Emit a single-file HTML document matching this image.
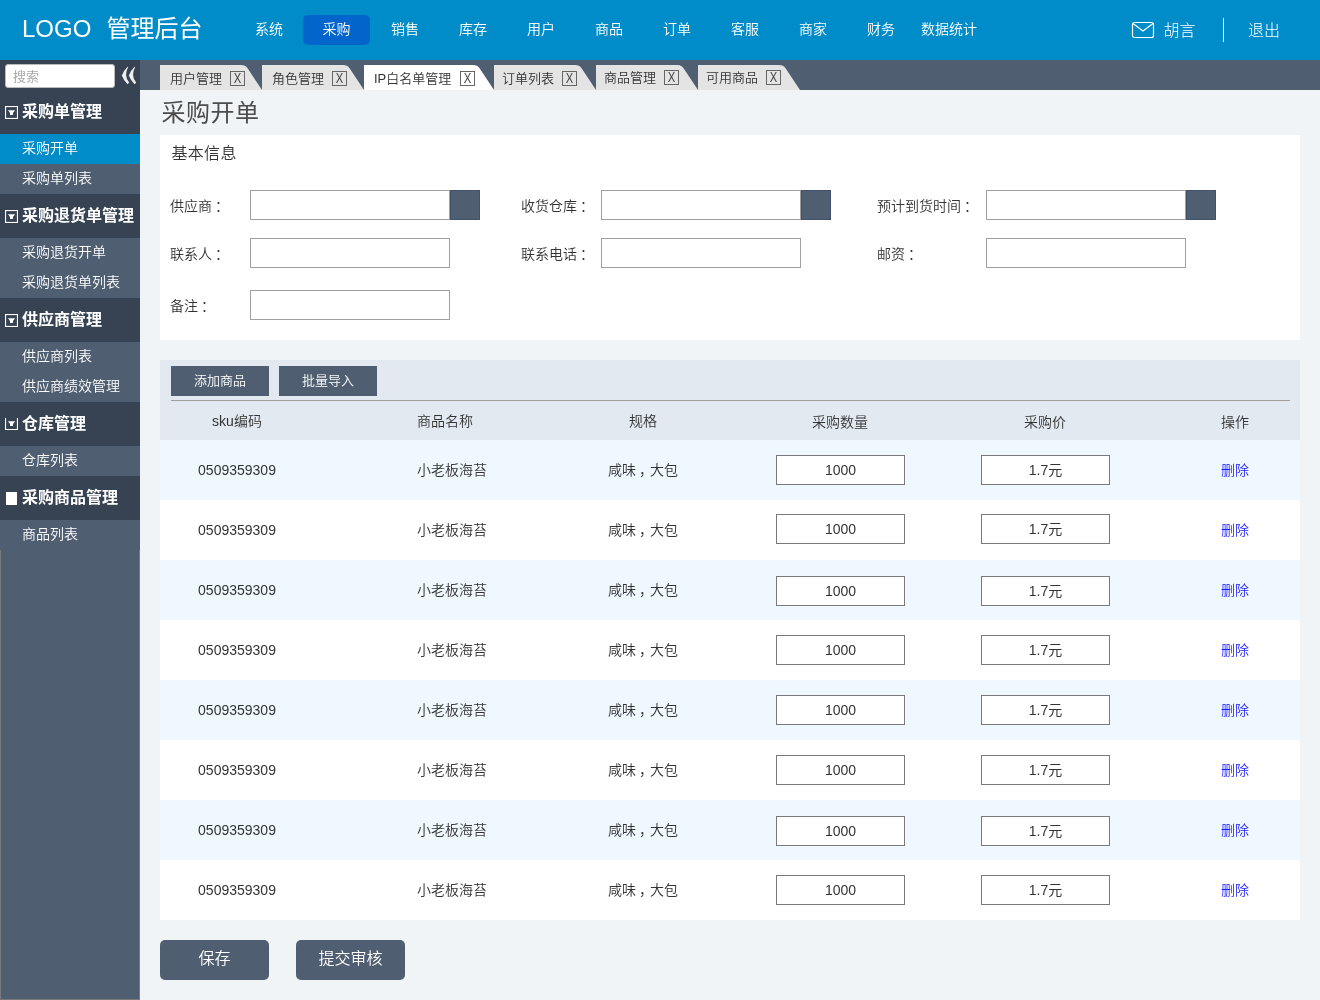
<!DOCTYPE html>
<html lang="zh-CN"><head><meta charset="utf-8"><title>采购开单</title>
<style>
*{box-sizing:border-box;margin:0;padding:0}
html,body{width:1320px;height:1000px;overflow:hidden}
body{position:relative;will-change:transform;background:#f0f4f7;font-family:"Liberation Sans","Noto Sans CJK SC",sans-serif;font-size:14px;color:#333;}
.abs,.hdr,.side,.tabs,.tab,.nav,.row,.c,.inp,.lbl,.fi,.fb,.btn,.sh,.si,.tt,.tx{position:absolute}
.hdr{left:0;top:0;width:1320px;height:60px;background:#008cc8;color:#fff}
.logo{left:22px;top:13px;font-size:24px;line-height:32px;white-space:nowrap;font-weight:350}
.nav{top:15px;width:68px;height:30px;line-height:28px;text-align:center;font-size:14px;color:#fff;border-radius:5px;font-weight:350}
.nav.act{background:#0265cb;width:67px}
.user{left:1163.5px;top:20px;font-size:16px;line-height:22px;font-weight:300}
.exit{left:1248px;top:20px;font-size:16px;line-height:22px;font-weight:300}
.vdiv{left:1223px;top:18px;width:1px;height:24px;background:#fff}
.side{left:0;top:60px;width:140px;height:940px;background:#374353}
.sfill{left:0;top:490px;width:140px;height:450px;background:#4f5e70;border:1px solid #797979;border-top:none}
.search{left:5px;top:3.5px;width:110px;height:24px;background:#fff;border-radius:3px;font-size:13px;line-height:24px;padding-left:7px;border:1px solid #bbb;color:#aaa}
.sh{left:0;width:140px;height:44px;background:#374353;color:#fff;font-weight:bold;font-size:16px;line-height:44px;padding-left:22px;white-space:nowrap}
.si{left:0;width:140px;height:30px;background:#4f5e70;color:#fff;font-size:14px;line-height:28px;padding-left:22px;white-space:nowrap;font-weight:350}
.si.on{background:#008cc8}
.ico{position:absolute;left:5px;top:16px;width:13px;height:13px}
.tabs{left:140px;top:60px;width:1180px;height:30px;background:#4f5e70}
.tab{top:65px;height:25px}
.tab svg{position:absolute;left:0;top:0}
.tt{font-size:13px;line-height:16px;white-space:nowrap;color:#333;font-weight:350}
.tx{width:15px;height:15px;border:1px solid #666;font-size:14px;line-height:13px;text-align:center;color:#444}
.tx b{display:block;font-weight:400;transform:scaleX(0.8)}
.title{left:161.5px;top:96.5px;font-size:24px;line-height:32px;color:#4c4c4c;font-weight:400;letter-spacing:0.5px}
.panel{left:160px;top:135px;width:1140px;height:205px;background:#fff}
.ptitle{left:171.5px;top:143px;letter-spacing:0.3px;font-size:16px;line-height:22px;color:#333;font-weight:350}
.lbl{font-size:14px;line-height:20px;white-space:nowrap;color:#333;font-weight:350}
.fi{width:200px;height:30px;background:#fff;border:1px solid #a0a0a0}
.fb{width:30px;height:30px;background:#4f5e70;border:1px solid #42526a}
.tpanel{left:160px;top:360px;width:1140px;height:80px;background:#e2e9f1}
.btn{background:#4f5e70;color:#fff;text-align:center;white-space:nowrap;font-weight:350}
.hr{left:171px;top:400px;width:1119px;height:1px;background:#a39f9c}
.th{position:absolute;top:411px;font-size:14px;line-height:20px;white-space:nowrap;color:#333;font-weight:350}
.row{left:160px;width:1140px;height:60px}
.c{top:20px;font-size:14px;line-height:20px;white-space:nowrap;color:#333;font-weight:350}
.c1{left:0;width:154px;text-align:center;font-weight:400}
.c2{left:257px}
.c3{left:406px;width:154px;text-align:center}
.c6{left:1040px;width:70px;text-align:center;color:#1e1eff}
.inp{top:15px;width:129px;height:30px;border:1px solid #797979;background:#fff;text-align:center;font-size:14px;line-height:28px;color:#333}
.pm{position:relative;left:3px}
.i1{left:616px}
.i2{left:821px}
</style></head><body>
<div class="hdr">
<span class="abs logo">LOGO</span><span class="abs logo" style="left:106.5px;font-weight:400">管理后台</span>
<span class="nav" style="left:235px">系统</span><span class="nav act" style="left:303px">采购</span><span class="nav" style="left:371px">销售</span><span class="nav" style="left:439px">库存</span><span class="nav" style="left:507px">用户</span><span class="nav" style="left:575px">商品</span><span class="nav" style="left:643px">订单</span><span class="nav" style="left:711px">客服</span><span class="nav" style="left:779px">商家</span><span class="nav" style="left:847px">财务</span><span class="nav" style="left:915px">数据统计</span>
<svg class="abs" style="left:1131px;top:21px" width="24" height="18" viewBox="0 0 24 18"><rect x="1.5" y="1.5" width="21" height="15" rx="2" ry="2" fill="none" stroke="#fff" stroke-width="1.2"/><path d="M2 2.5 L12 10 L22 2.5" fill="none" stroke="#fff" stroke-width="1.2"/></svg>
<span class="abs user">胡言</span><span class="abs vdiv"></span><span class="abs exit">退出</span>
</div>
<div class="side">
<div class="abs sfill"></div>
<div class="abs search">搜索</div>
<svg class="abs" style="left:120px;top:5px" width="18" height="21" viewBox="0 0 18 21"><path d="M7.6 1.8 Q3.8 5.5 1.8 10.5 Q3.4 15 7.6 19.2 L9.2 17.6 Q3.4 10.5 8.2 1.9 Z M14.6 1.8 Q10.8 5.5 8.8 10.5 Q10.4 15 14.6 19.2 L16.2 17.6 Q10.4 10.5 15.2 1.9 Z" fill="#eee"/></svg>
<div class="sh" style="top:30px"><svg class="ico" viewBox="0 0 13 13"><rect x="0.5" y="0.5" width="12" height="12" fill="none" stroke="#fff" stroke-width="1.2"/><path d="M3 4.2 H10.2 L8 7 V9 H5 V7 Z" fill="#fff"/></svg>采购单管理</div>
<div class="si on" style="top:74px">采购开单</div>
<div class="si" style="top:104px">采购单列表</div>
<div class="sh" style="top:134px"><svg class="ico" viewBox="0 0 13 13"><rect x="0.5" y="0.5" width="12" height="12" fill="none" stroke="#fff" stroke-width="1.2"/><path d="M3 4.2 H10.2 L8 7 V9 H5 V7 Z" fill="#fff"/></svg>采购退货单管理</div>
<div class="si" style="top:178px">采购退货开单</div>
<div class="si" style="top:208px">采购退货单列表</div>
<div class="sh" style="top:238px"><svg class="ico" viewBox="0 0 13 13"><rect x="0.5" y="0.5" width="12" height="12" fill="none" stroke="#fff" stroke-width="1.2"/><path d="M3 4.2 H10.2 L8 7 V9 H5 V7 Z" fill="#fff"/></svg>供应商管理</div>
<div class="si" style="top:282px">供应商列表</div>
<div class="si" style="top:312px">供应商绩效管理</div>
<div class="sh" style="top:342px"><svg class="ico" style="top:15px" viewBox="0 0 13 13"><path d="M0.5 1 V12.5 H12.5 V1" fill="none" stroke="#fff" stroke-width="1.2"/><path d="M3 4.2 H10.2 L8 7 V9 H5 V7 Z" fill="#fff"/></svg>仓库管理</div>
<div class="si" style="top:386px">仓库列表</div>
<div class="sh" style="top:416px"><svg class="ico" viewBox="0 0 13 13"><rect x="1" y="0" width="11" height="13" fill="#fff"/></svg>采购商品管理</div>
<div class="si" style="top:460px">商品列表</div>
</div>
<div class="tabs"></div>
<div class="tab" style="left:160px;width:102px">
<svg width="102" height="25" viewBox="0 0 102 25"><path d="M0 25 V0 H81 Q85.5 0 87.4 3 L102 25 Z" fill="#e4e4e4"/></svg>
<span class="tt" style="left:10px;top:6px">用户管理</span><span class="tx" style="left:70px;top:6px"><b>X</b></span></div><div class="tab" style="left:262px;width:102px">
<svg width="102" height="25" viewBox="0 0 102 25"><path d="M0 25 V0 H81 Q85.5 0 87.4 3 L102 25 Z" fill="#e4e4e4"/></svg>
<span class="tt" style="left:10px;top:6px">角色管理</span><span class="tx" style="left:70px;top:6px"><b>X</b></span></div><div class="tab tact" style="left:364px;width:130px">
<svg width="130" height="25" viewBox="0 0 130 25"><path d="M0 25 V0 H109 Q113.5 0 115.4 3 L130 25 Z" fill="#ffffff"/></svg>
<span class="tt" style="left:10px;top:6px">IP白名单管理</span><span class="tx" style="left:96px;top:6px"><b>X</b></span></div><div class="tab" style="left:494px;width:102px">
<svg width="102" height="25" viewBox="0 0 102 25"><path d="M0 25 V0 H81 Q85.5 0 87.4 3 L102 25 Z" fill="#e4e4e4"/></svg>
<span class="tt" style="left:8px;top:6px">订单列表</span><span class="tx" style="left:68px;top:6px"><b>X</b></span></div><div class="tab" style="left:596px;width:102px">
<svg width="102" height="25" viewBox="0 0 102 25"><path d="M0 25 V0 H81 Q85.5 0 87.4 3 L102 25 Z" fill="#e4e4e4"/></svg>
<span class="tt" style="left:8px;top:5px">商品管理</span><span class="tx" style="left:68px;top:5px"><b>X</b></span></div><div class="tab" style="left:698px;width:102px">
<svg width="102" height="25" viewBox="0 0 102 25"><path d="M0 25 V0 H81 Q85.5 0 87.4 3 L102 25 Z" fill="#e4e4e4"/></svg>
<span class="tt" style="left:8px;top:5px">可用商品</span><span class="tx" style="left:68px;top:5px"><b>X</b></span></div>
<div class="abs title">采购开单</div>
<div class="abs panel"></div>
<div class="abs ptitle">基本信息</div>
<span class="lbl" style="left:170px;top:196px">供应商<span class="pm">：</span></span><span class="fi" style="left:250px;top:190px"></span><span class="fb" style="left:450px;top:190px"></span>
<span class="lbl" style="left:521px;top:196px">收货仓库<span class="pm">：</span></span><span class="fi" style="left:601px;top:190px"></span><span class="fb" style="left:801px;top:190px"></span>
<span class="lbl" style="left:877px;top:196px">预计到货时间<span class="pm">：</span></span><span class="fi" style="left:986px;top:190px"></span><span class="fb" style="left:1186px;top:190px"></span>
<span class="lbl" style="left:170px;top:244px">联系人<span class="pm">：</span></span><span class="fi" style="left:250px;top:238px"></span>
<span class="lbl" style="left:521px;top:244px">联系电话<span class="pm">：</span></span><span class="fi" style="left:601px;top:238px"></span>
<span class="lbl" style="left:877px;top:244px">邮资<span class="pm">：</span></span><span class="fi" style="left:986px;top:238px"></span>
<span class="lbl" style="left:170px;top:296px">备注<span class="pm">：</span></span><span class="fi" style="left:250px;top:290px"></span>
<div class="abs tpanel"></div>
<span class="btn" style="left:171px;top:366px;width:98px;height:30px;font-size:13px;line-height:29px">添加商品</span>
<span class="btn" style="left:279px;top:366px;width:98px;height:30px;font-size:13px;line-height:29px">批量导入</span>
<div class="abs hr"></div>
<span class="th" style="left:160px;width:154px;text-align:center">sku编码</span>
<span class="th" style="left:417px">商品名称</span>
<span class="th" style="left:566px;width:154px;text-align:center">规格</span>
<span class="th" style="left:770px;width:140px;text-align:center;top:412px">采购数量</span>
<span class="th" style="left:975px;width:140px;text-align:center;top:412px">采购价</span>
<span class="th" style="left:1200px;width:70px;text-align:center;top:412px">操作</span>
<div class="row" style="top:440px;background:#f0f8ff">
<span class="c c1">0509359309</span><span class="c c2">小老板海苔</span><span class="c c3">咸味<span class="pm">，</span>大包</span>
<span class="inp i1" style="top:15px">1000</span><span class="inp i2" style="top:15px">1.7元</span><span class="c c6">删除</span></div>
<div class="row" style="top:500px;background:#ffffff">
<span class="c c1">0509359309</span><span class="c c2">小老板海苔</span><span class="c c3">咸味<span class="pm">，</span>大包</span>
<span class="inp i1" style="top:14px">1000</span><span class="inp i2" style="top:14px">1.7元</span><span class="c c6">删除</span></div>
<div class="row" style="top:560px;background:#f0f8ff">
<span class="c c1">0509359309</span><span class="c c2">小老板海苔</span><span class="c c3">咸味<span class="pm">，</span>大包</span>
<span class="inp i1" style="top:16px">1000</span><span class="inp i2" style="top:16px">1.7元</span><span class="c c6">删除</span></div>
<div class="row" style="top:620px;background:#ffffff">
<span class="c c1">0509359309</span><span class="c c2">小老板海苔</span><span class="c c3">咸味<span class="pm">，</span>大包</span>
<span class="inp i1" style="top:15px">1000</span><span class="inp i2" style="top:15px">1.7元</span><span class="c c6">删除</span></div>
<div class="row" style="top:680px;background:#f0f8ff">
<span class="c c1">0509359309</span><span class="c c2">小老板海苔</span><span class="c c3">咸味<span class="pm">，</span>大包</span>
<span class="inp i1" style="top:15px">1000</span><span class="inp i2" style="top:15px">1.7元</span><span class="c c6">删除</span></div>
<div class="row" style="top:740px;background:#ffffff">
<span class="c c1">0509359309</span><span class="c c2">小老板海苔</span><span class="c c3">咸味<span class="pm">，</span>大包</span>
<span class="inp i1" style="top:15px">1000</span><span class="inp i2" style="top:15px">1.7元</span><span class="c c6">删除</span></div>
<div class="row" style="top:800px;background:#f0f8ff">
<span class="c c1">0509359309</span><span class="c c2">小老板海苔</span><span class="c c3">咸味<span class="pm">，</span>大包</span>
<span class="inp i1" style="top:16px">1000</span><span class="inp i2" style="top:16px">1.7元</span><span class="c c6">删除</span></div>
<div class="row" style="top:860px;background:#ffffff">
<span class="c c1">0509359309</span><span class="c c2">小老板海苔</span><span class="c c3">咸味<span class="pm">，</span>大包</span>
<span class="inp i1" style="top:15px">1000</span><span class="inp i2" style="top:15px">1.7元</span><span class="c c6">删除</span></div>
<span class="btn" style="left:160px;top:940px;width:109px;height:40px;font-size:16px;line-height:37px;border-radius:5px">保存</span>
<span class="btn" style="left:296px;top:940px;width:109px;height:40px;font-size:16px;line-height:37px;border-radius:5px">提交审核</span>
</body></html>
